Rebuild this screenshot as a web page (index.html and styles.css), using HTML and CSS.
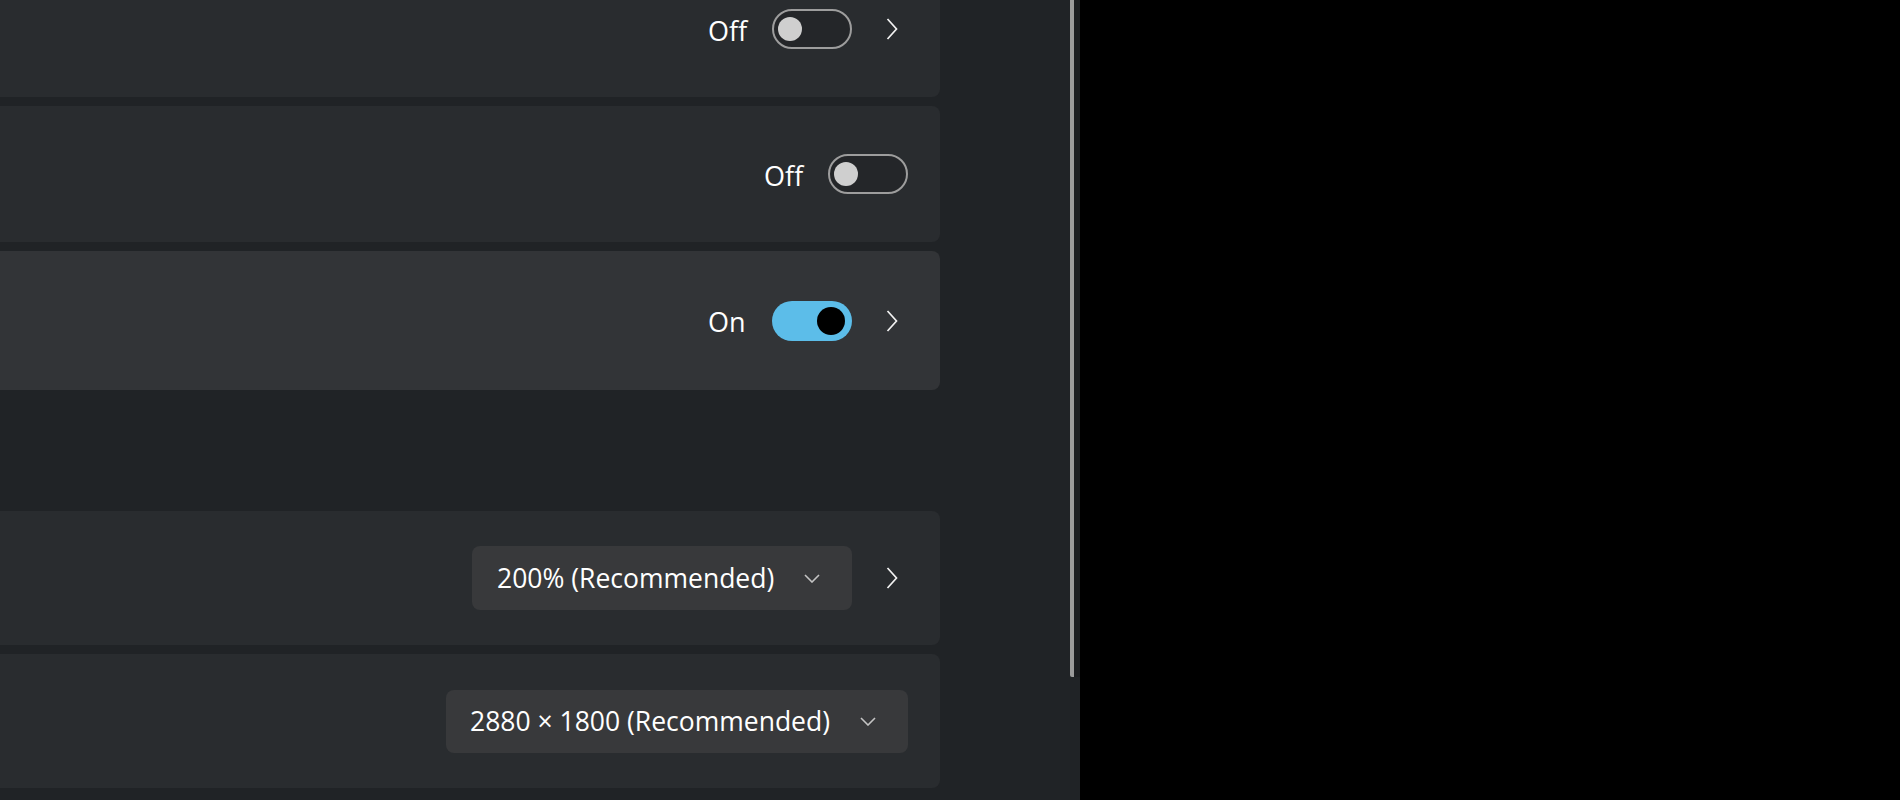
FILE: index.html
```html
<!DOCTYPE html>
<html lang="en">
<head>
<meta charset="utf-8">
<title>Display settings</title>
<link rel="stylesheet" href="styles.css">
</head>
<body>
<div class="window">
  <main class="panel">
    <div class="content">
      <div class="card card-first">
        <div class="actions">
          <span class="state">Off</span>
          <span class="toggle toggle-off"><span class="knob"></span></span>
          <span class="chev-box"><svg class="chev" viewBox="0 0 12 22"><path d="M1.5 1 L10.5 11 L1.5 21"/></svg></span>
        </div>
      </div>
      <div class="card">
        <div class="actions">
          <span class="state">Off</span>
          <span class="toggle toggle-off"><span class="knob"></span></span>
        </div>
      </div>
      <div class="card card-hover">
        <div class="actions">
          <span class="state">On</span>
          <span class="toggle toggle-on"><span class="knob"></span></span>
          <span class="chev-box"><svg class="chev" viewBox="0 0 12 22"><path d="M1.5 1 L10.5 11 L1.5 21"/></svg></span>
        </div>
      </div>
      <div class="section-gap"></div>
      <div class="card card-short">
        <div class="actions">
          <span class="dropdown dd-scale">
            <span class="dd-text">200% (Recommended)</span>
            <svg class="dd-chev" viewBox="0 0 16 9"><path d="M1 1 L8 8 L15 1"/></svg>
          </span>
          <span class="chev-box"><svg class="chev" viewBox="0 0 12 22"><path d="M1.5 1 L10.5 11 L1.5 21"/></svg></span>
        </div>
      </div>
      <div class="card card-short">
        <div class="actions">
          <span class="dropdown dd-res">
            <span class="dd-text">2880 × 1800 (Recommended)</span>
            <svg class="dd-chev" viewBox="0 0 16 9"><path d="M1 1 L8 8 L15 1"/></svg>
          </span>
        </div>
      </div>
    </div>
    <div class="scrollbar"><div class="thumb"></div></div>
  </main>
</div>
</body>
</html>
```
FILE: styles.css
```css
html, body {
  margin: 0;
  padding: 0;
  height: 100%;
  background: #000;
  overflow: hidden;
}

body {
  font-family: "Open Sans", "Noto Sans", sans-serif;
  color: #ffffff;
}

.window {
  display: flex;
  height: 800px;
}

.panel {
  width: 1080px;
  height: 800px;
  background: #202326;
  display: flex;
  overflow: hidden;
}

.content {
  flex: 1;
  display: flex;
  flex-direction: column;
  gap: 9px;
  margin-top: -39px;
  margin-left: -40px;
  padding-right: 130px;
}

.card {
  height: 136px;
  flex: none;
  background: #292c2f;
  border-radius: 8px;
  display: flex;
  align-items: center;
  justify-content: flex-end;
  padding-right: 32px;
  box-sizing: border-box;
}

.card-hover {
  height: 139px;
  background: #323437;
}

.card-short {
  height: 134px;
}

.section-gap {
  height: 103px;
  flex: none;
}

.actions {
  display: flex;
  align-items: center;
}

.state {
  font-size: 27px;
  min-width: 40px;
  margin-right: 24px;
  line-height: 40px;
  padding-top: 3px;
}

.toggle {
  width: 80px;
  height: 40px;
  box-sizing: border-box;
  border-radius: 20px;
  display: flex;
  align-items: center;
}

.toggle-off {
  border: 2px solid #9d9d9d;
  background: #242629;
  padding-left: 4px;
}

.toggle-off .knob {
  width: 24px;
  height: 24px;
  border-radius: 50%;
  background: #cfcfcf;
}

.toggle-on {
  background: #5cbde9;
  justify-content: flex-end;
  padding-right: 7px;
}

.toggle-on .knob {
  width: 28px;
  height: 28px;
  border-radius: 50%;
  background: #000;
}

.chev-box {
  width: 32px;
  height: 32px;
  margin-left: 24px;
  display: flex;
  align-items: center;
  justify-content: center;
}

.chev {
  width: 12px;
  height: 22px;
  fill: none;
  stroke: #f2f2f2;
  stroke-width: 1.7;
}

.dropdown {
  height: 64px;
  box-sizing: border-box;
  background: #38393b;
  border-radius: 8px;
  display: flex;
  align-items: center;
  justify-content: space-between;
  padding-left: 25px;
  padding-right: 32px;
}

.dd-scale {
  width: 380px;
}

.dd-res {
  width: 462px;
  height: 63px;
  padding-left: 24px;
}

.dd-text {
  font-size: 26.5px;
  white-space: nowrap;
}

.dd-chev {
  width: 16px;
  height: 9px;
  fill: none;
  stroke: #c4c4c4;
  stroke-width: 1.6;
}

.scrollbar {
  width: 10px;
  flex: none;
}

.thumb {
  width: 10px;
  height: 677px;
  background: linear-gradient(to right, #9b9b9b 0 4px, #1c1e21 4px 10px);
  border-bottom-left-radius: 2px;
}
```
